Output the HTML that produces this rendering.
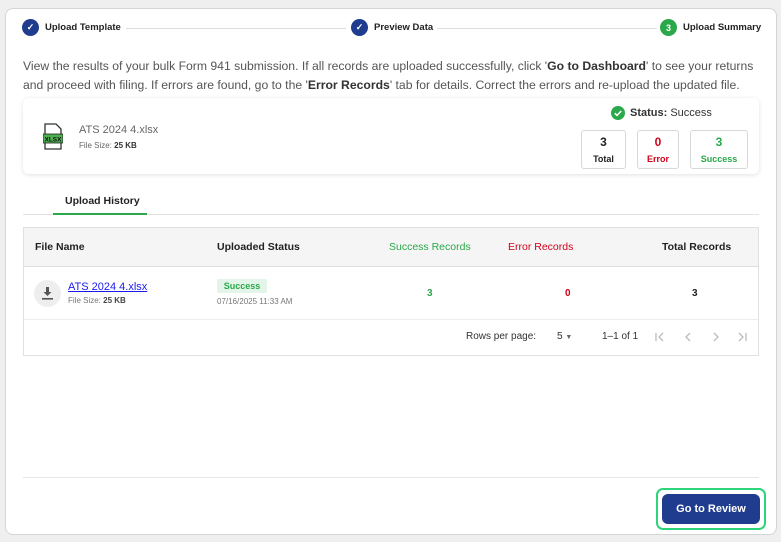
<!DOCTYPE html>
<html><head><style>
*{box-sizing:border-box;margin:0;padding:0}
body{width:781px;height:542px;background:#efefef;font-family:"Liberation Sans",sans-serif;position:relative;overflow:hidden;color:#222}
.card{position:absolute;left:5px;top:8px;width:772px;height:527px;background:#fff;border:1px solid #d4d4d4;border-radius:8px}
.abs{position:absolute}
.step{position:absolute;top:19px;display:flex;align-items:center;font-size:9.5px;font-weight:bold;color:#222}
.circ{width:17px;height:17px;border-radius:50%;background:#1f3c8f;color:#fff;display:flex;align-items:center;justify-content:center;margin-right:6px;font-size:9px}
.line{position:absolute;top:28px;height:1px;background:#ddd}
.desc{position:absolute;left:23px;top:57px;width:745px;font-size:12.2px;line-height:19px;color:#555}
.desc b{color:#333}
.fbox{position:absolute;left:23px;top:98px;width:736px;height:76px;border-radius:6px;box-shadow:0 1px 5px rgba(0,0,0,.12);background:#fff}
.stat{position:absolute;top:130px;height:39px;border:1px solid #d8d8d8;border-radius:3px;text-align:center;font-size:9px;font-weight:bold}
.stat .n{font-size:12px;margin-top:4px;margin-bottom:5px}
.th{position:absolute;top:241px;font-size:10.5px;font-weight:bold}
.pg{position:absolute;top:331px;font-size:10px;color:#333}
</style></head><body>
<div class="card"></div>
<div class="step" style="left:22px"><div class="circ">✓</div>Upload Template</div>
<div class="line" style="left:126px;width:220px"></div>
<div class="step" style="left:351px"><div class="circ">✓</div>Preview Data</div>
<div class="line" style="left:437px;width:220px"></div>
<div class="step" style="left:660px"><div class="circ" style="background:#2aa84a">3</div>Upload Summary</div>
<div class="desc">View the results of your bulk Form 941 submission. If all records are uploaded successfully, click '<b>Go to Dashboard</b>' to see your returns and proceed with filing. If errors are found, go to the '<b>Error Records</b>' tab for details. Correct the errors and re-upload the updated file.</div>
<div class="fbox"></div>
<svg class="abs" style="left:43px;top:123px" width="20" height="27" viewBox="0 0 20 27"><path d="M2 1h11l5 5v20H2z" fill="#fff" stroke="#333" stroke-width="1.3"/><rect x="0" y="11" width="20" height="9" fill="#4caf50" stroke="#222" stroke-width=".8"/><text x="10" y="18.5" font-size="6.5" font-weight="bold" text-anchor="middle" fill="#111" font-family="Liberation Sans">XLSX</text></svg>
<div class="abs" style="left:79px;top:124px;font-size:11px;color:#666">ATS 2024 4.xlsx</div>
<div class="abs" style="left:79px;top:141px;font-size:8px;color:#666">File Size: <b style="color:#333">25 KB</b></div>
<svg class="abs" style="left:611px;top:106px" width="14" height="14"><circle cx="7" cy="7" r="7" fill="#2aa84a"/><path d="M3.8 7.2l2.2 2.2 4.2-4.4" stroke="#fff" stroke-width="1.6" fill="none"/></svg>
<div class="abs" style="left:630px;top:107px;font-size:11px;color:#333"><b>Status:</b> Success</div>
<div class="stat" style="left:581px;width:45px"><div class="n">3</div>Total</div>
<div class="stat" style="left:637px;width:42px;color:#d0021b"><div class="n">0</div>Error</div>
<div class="stat" style="left:690px;width:58px;color:#2aa84a"><div class="n">3</div>Success</div>
<div class="abs" style="left:65px;top:195px;font-size:10.5px;font-weight:bold">Upload History</div>
<div class="abs" style="left:23px;top:214px;width:736px;height:1px;background:#e3e3e3"></div>
<div class="abs" style="left:53px;top:213px;width:94px;height:2px;background:#2aa84a"></div>
<div class="abs" style="left:23px;top:227px;width:736px;height:129px;border:1px solid #e0e0e0"></div>
<div class="abs" style="left:24px;top:228px;width:734px;height:39px;background:#f5f5f5;border-bottom:1px solid #ddd"></div>
<div class="th" style="left:35px">File Name</div>
<div class="th" style="left:217px">Uploaded Status</div>
<div class="th" style="left:389px;color:#2aa84a;font-weight:normal">Success Records</div>
<div class="th" style="left:508px;color:#d0021b;font-weight:normal">Error Records</div>
<div class="th" style="left:662px">Total Records</div>
<div class="abs" style="left:34px;top:280px;width:27px;height:27px;border-radius:50%;background:#eee"></div>
<svg class="abs" style="left:41px;top:286px" width="13" height="14" viewBox="0 0 13 14"><path d="M5 1h3v5h2.5L6.5 10 2.5 6H5z" fill="#555"/><rect x="1" y="12" width="11" height="1.6" fill="#555"/></svg>
<div class="abs" style="left:68px;top:281px;font-size:11px;color:#1a1aee;text-decoration:underline">ATS 2024 4.xlsx</div>
<div class="abs" style="left:68px;top:296px;font-size:8px;color:#777">File Size: <b style="color:#444">25 KB</b></div>
<div class="abs" style="left:217px;top:279px;width:50px;height:14px;background:#e3f4e8;color:#2aa84a;font-size:9px;font-weight:bold;text-align:center;line-height:14px;border-radius:2px">Success</div>
<div class="abs" style="left:217px;top:297px;font-size:8px;color:#777">07/16/2025 11:33 AM</div>
<div class="abs" style="left:427px;top:288px;font-size:10px;font-weight:bold;color:#2aa84a">3</div>
<div class="abs" style="left:565px;top:288px;font-size:10px;font-weight:bold;color:#d0021b">0</div>
<div class="abs" style="left:692px;top:288px;font-size:10px;font-weight:bold">3</div>
<div class="abs" style="left:24px;top:319px;width:734px;height:1px;background:#eee"></div>
<div class="pg" style="left:466px">Rows per page:</div>
<div class="pg" style="left:557px">5 <span style="font-size:7px;color:#666">▼</span></div>
<div class="pg" style="left:602px">1–1 of 1</div>
<svg class="abs" style="left:652px;top:330px" width="100" height="14" viewBox="0 0 100 14" fill="none" stroke="#bbb" stroke-width="1.3"><path d="M4 3v8M11 3l-4 4 4 4"/><path d="M38 3l-4 4 4 4"/><path d="M62 3l4 4-4 4"/><path d="M87 3l4 4-4 4M94 3v8"/></svg>
<div class="abs" style="left:23px;top:477px;width:736px;height:1px;background:#e6e6e6"></div>
<div class="abs" style="left:656px;top:488px;width:110px;height:42px;border:2.5px solid #2ed47a;border-radius:7px"></div>
<div class="abs" style="left:662px;top:494px;width:98px;height:30px;background:#1f3c8f;border-radius:6px;color:#fff;font-size:11px;font-weight:bold;text-align:center;line-height:30px">Go to Review</div>
</body></html>
